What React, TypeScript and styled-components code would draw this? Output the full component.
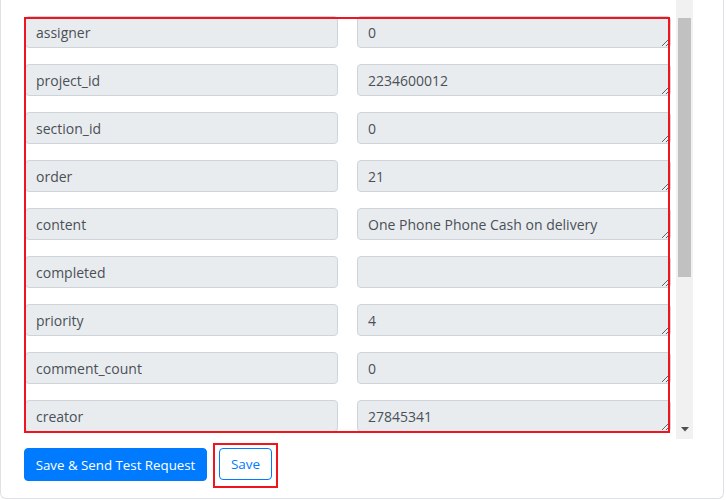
import React from "react";
import styled, { createGlobalStyle } from "styled-components";

const Global = createGlobalStyle`
  html, body { margin: 0; padding: 0; background: #fff; }
  body { font-family: "Open Sans", "Noto Sans", Arial, sans-serif; overflow: hidden; }
  * { box-sizing: border-box; }
`;

const Card = styled.div`
  width: 724px;
  height: 499px;
  border: 1px solid #dee2e6;
  border-top: none;
  border-radius: 0 0 6px 6px;
  padding: 0 30px 16px 23px;
  display: flex;
  flex-direction: column;
`;

const ScrollWrap = styled.div`
  position: relative;
  display: flex;
  height: 439px;
`;

const Viewport = styled.div`
  width: 652px;
  overflow: hidden;
  padding-left: 1px;
  padding-right: 5px;
`;

const List = styled.div`
  margin-top: -32px;
  display: flex;
  flex-direction: column;
  gap: 16px;
`;

const Row = styled.div`
  display: grid;
  grid-template-columns: 313px 314px;
  column-gap: 19px;
`;

const Label = styled.input`
  height: 32px;
  width: 100%;
  padding: 0 10px;
  font: 14px "Open Sans", "Noto Sans", Arial, sans-serif;
  color: #495057;
  background: #e9ecef;
  border: 1px solid #ced4da;
  border-radius: 4px;
  outline: none;
`;

const Value = styled.textarea`
  display: block;
  height: 32px;
  width: 100%;
  padding: 5px 10px;
  font: 14px/21px "Open Sans", "Noto Sans", Arial, sans-serif;
  color: #495057;
  background: #e9ecef;
  border: 1px solid #ced4da;
  border-radius: 4px;
  resize: vertical;
  overflow: hidden;
  outline: none;
`;

const Track = styled.div`
  width: 17px;
  background: #f1f1f1;
  display: flex;
  flex-direction: column;
  align-items: center;
`;

const Thumb = styled.div`
  margin-top: 18px;
  width: 13px;
  height: 259px;
  background: #c1c1c1;
`;

const Spacer = styled.div`
  flex: 1;
`;

const ArrowBox = styled.div`
  height: 15px;
  display: flex;
  align-items: center;
  justify-content: center;
  padding-bottom: 4px;
`;

const Highlight = styled.div`
  position: absolute;
  left: 0px;
  top: 17px;
  width: 646px;
  height: 416px;
  border: 2px solid #f0141e;
  pointer-events: none;
`;

const Actions = styled.div`
  margin-top: 9px;
  display: flex;
  gap: 12px;
  align-items: flex-start;
`;

const PrimaryButton = styled.button`
  height: 33px;
  width: 183px;
  padding: 0;
  background: #007bff;
  color: #fff;
  border: 1px solid #007bff;
  border-radius: 4px;
  font: 500 13.3px "Open Sans", "Noto Sans", Arial, sans-serif;
  cursor: pointer;
`;

const OutlineWrap = styled.span`
  position: relative;
  display: inline-flex;
  &::after {
    content: "";
    position: absolute;
    left: -6px;
    top: -5px;
    right: -6px;
    bottom: -8px;
    border: 2px solid #f0141e;
    pointer-events: none;
  }
`;

const OutlineButton = styled.button`
  height: 32px;
  width: 53px;
  padding: 0;
  background: #fff;
  color: #007bff;
  border: 1px solid #007bff;
  border-radius: 4px;
  font: 13.5px "Open Sans", "Noto Sans", Arial, sans-serif;
  cursor: pointer;
`;

const rows: [string, string][] = [
  ["responsible_uid", ""],
  ["assigner", "0"],
  ["project_id", "2234600012"],
  ["section_id", "0"],
  ["order", "21"],
  ["content", "One Phone Phone Cash on delivery"],
  ["completed", ""],
  ["priority", "4"],
  ["comment_count", "0"],
  ["creator", "27845341"],
];

export default function App() {
  return (
    <>
      <Global />
      <Card>
        <ScrollWrap>
          <Viewport>
            <List>
              {rows.map(([k, v]) => (
                <Row key={k}>
                  <Label readOnly value={k} />
                  <Value readOnly value={v} />
                </Row>
              ))}
            </List>
          </Viewport>
          <Track>
            <Thumb />
            <Spacer />
            <ArrowBox>
              <svg width="8" height="5" viewBox="0 0 8 5">
                <path d="M0 0 L8 0 L4 4.5 Z" fill="#505050" />
              </svg>
            </ArrowBox>
          </Track>
          <Highlight />
        </ScrollWrap>
        <Actions>
          <PrimaryButton>Save &amp; Send Test Request</PrimaryButton>
          <OutlineWrap>
            <OutlineButton>Save</OutlineButton>
          </OutlineWrap>
        </Actions>
      </Card>
    </>
  );
}
